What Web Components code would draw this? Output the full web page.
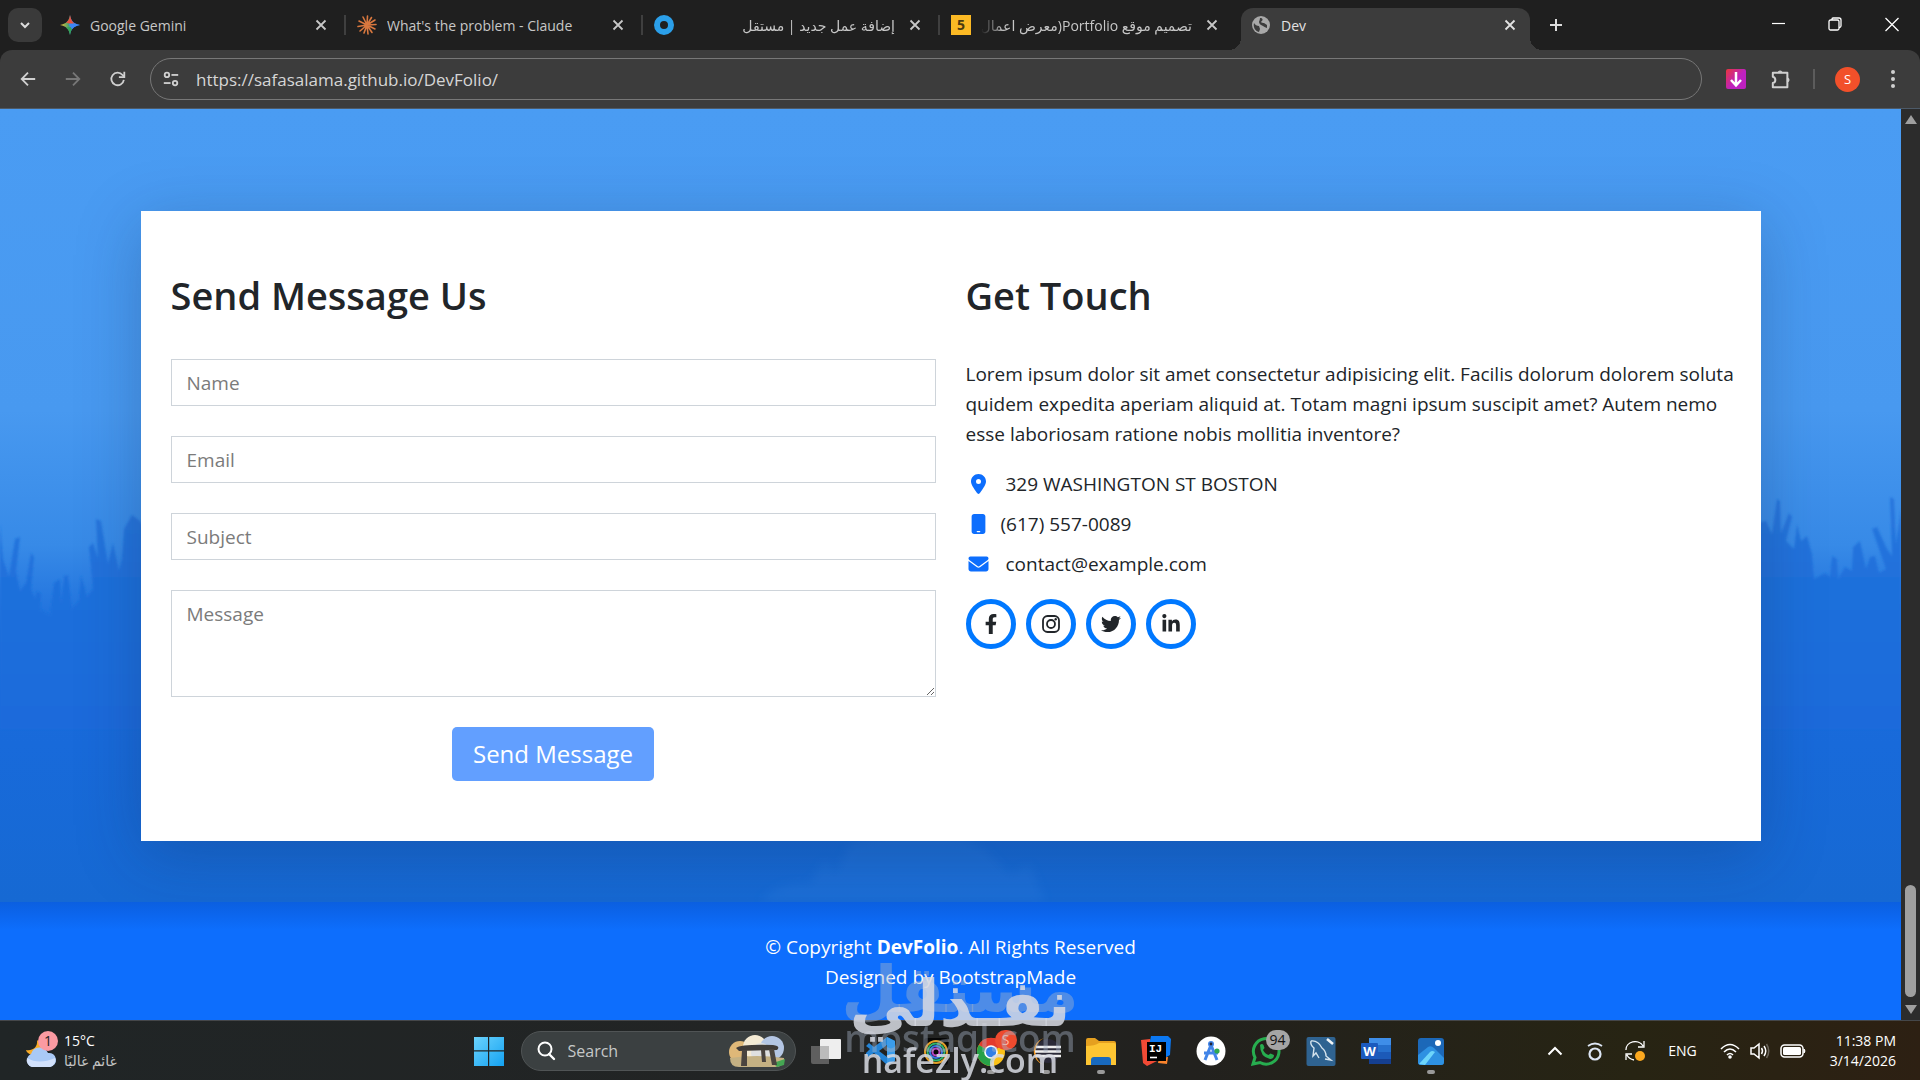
<!DOCTYPE html>
<html lang="en">
<head>
<meta charset="UTF-8">
<meta name="viewport" content="width=device-width, initial-scale=1">
<title>Dev</title>
<style>
  html, body { margin: 0; height: 100%; }
  body {
    display: flex;
    flex-direction: column;
    min-height: 100vh;
    overflow: hidden;
    background: #1f1f1f;
    font-family: "Open Sans", "DejaVu Sans", sans-serif;
  }
</style>
</head>
<body>
<browser-tabs>
  <browser-tab icon="gemini">Google Gemini</browser-tab>
  <browser-tab icon="claude">What's the problem - Claude</browser-tab>
  <browser-tab icon="ring" dir="rtl">إضافة عمل جديد | مستقل</browser-tab>
  <browser-tab icon="five" dir="rtl">تصميم موقع Portfolio(معرض اعمال</browser-tab>
  <browser-tab icon="globe" active>Dev</browser-tab>
</browser-tabs>
<browser-toolbar url="https://safasalama.github.io/DevFolio/"></browser-toolbar>
<page-view>
  <contact-section>
    <contact-form slot="form"></contact-form>
    <contact-info slot="info"></contact-info>
  </contact-section>
  <page-footer></page-footer>
</page-view>
<task-bar></task-bar>
<stamp-overlay></stamp-overlay>

<script>
const ICONS = {
  gemini: ["0 0 20 20", `<defs><linearGradient id="g" x1="0" y1="0" x2="1" y2="0"><stop offset="0" stop-color="#f9c22e"/><stop offset=".42" stop-color="#4fa26a"/><stop offset=".6" stop-color="#3b86f7"/></linearGradient></defs><path d="M10 0C11 6 14 9 20 10C14 11 11 14 10 20C9 14 6 11 0 10C6 9 9 6 10 0Z" fill="url(#g)"/><path d="M10 0C11 5 12.500 7.500 15 8.800L9 8.500L6 7.600C8.500 6 9.500 4 10 0Z" fill="#e9513d"/><path d="M6 12.500L11 12L12 14C10.800 16 10.400 18 10 20C9.500 16 8 14 6 12.500Z" fill="#33a457"/><path d="M8.500 9L15 8.500C17 9.500 19 9.800 20 10C16 10.600 14 12 12 14Z" fill="#3b86f7"/>`],
  claude: ["0 0 20 20", `<g stroke="#d9783f" stroke-width="1.600" stroke-linecap="round"><path d="M10 10L10.500 1M10 10L14.500 2.500M10 10L18 5M10 10L19 9.500M10 10L18 14M10 10L15 17.500M10 10L11 19M10 10L7 18M10 10L3 16M10 10L1 11.500M10 10L2 6M10 10L6 2"/></g>`],
  ring: ["0 0 20 20", `<circle cx="10" cy="10" r="7" fill="none" stroke="#2b9fe9" stroke-width="6"/>`],
  five: ["0 0 20 20", `<rect width="20" height="20" fill="#fbb924"/><text x="10" y="15" text-anchor="middle" font-family="Open Sans, sans-serif" font-size="14" font-weight="700" fill="#4a3a10">5</text>`],
  globe: ["0 0 20 20", `<circle cx="10" cy="10" r="9" fill="#a8a8a8"/><path d="M3 8C4 10 6 11 8 11L9 14L8 17C4 16 2 12 3 8ZM9 3C12 3 12 5 11 6C9 7 11 8 13 8L16 10L16 13C14 12 13 12 12 11C10 10 8 9 8 7C8 6 9 5 9 3Z" fill="#3c3c3c"/>`],
  down: ["0 0 20 20", `<path d="M6 8L10 12L14 8" fill="none" stroke="currentColor" stroke-width="2"/>`],
  close: ["0 0 20 20", `<path d="M5.500 5.500L14.500 14.500M14.500 5.500L5.500 14.500" stroke="currentColor" stroke-width="1.800"/>`],
  plus: ["0 0 20 20", `<path d="M10 4V16M4 10H16" stroke="currentColor" stroke-width="2"/>`],
  minimize: ["0 0 20 20", `<path d="M4 9.500H17" stroke="currentColor" stroke-width="1.200"/>`],
  restore: ["0 0 20 20", `<g fill="none" stroke="currentColor" stroke-width="1.300"><rect x="4" y="6" width="10" height="10" rx="1.500"/><path d="M7 6V5Q7 4 8 4H14Q16 4 16 6V12Q16 13.500 14 13.500"/></g>`],
  exit: ["0 0 20 20", `<path d="M3.500 4L16.500 17M16.500 4L3.500 17" stroke="currentColor" stroke-width="1.300"/>`],
  back: ["0 0 20 20", `<path d="M18 10H3M10 3L3 10L10 17" fill="none" stroke="currentColor" stroke-width="2"/>`],
  forward: ["0 0 20 20", `<path d="M2 10H17M10 3L17 10L10 17" fill="none" stroke="currentColor" stroke-width="2"/>`],
  reload: ["0 0 20 20", `<path d="M16.500 11A7 7 0 1 1 15 5.500L17 7.500" fill="none" stroke="currentColor" stroke-width="2"/><path d="M17 2V8H11" fill="none" stroke="currentColor" stroke-width="2"/>`],
  tune: ["0 0 20 20", `<g fill="none" stroke="currentColor" stroke-width="2"><circle cx="5.500" cy="5.500" r="2.500"/><path d="M10.500 5.500H18"/><circle cx="14.500" cy="14.500" r="2.500"/><path d="M2 14.500H9.500"/></g>`],
  download: ["0 0 20 20", `<defs><linearGradient id="d" x1="0" y1="0" x2=".6" y2=".5"><stop offset="0" stop-color="#e8363c"/><stop offset="1" stop-color="#be21c0"/></linearGradient></defs><rect width="20" height="20" rx="2" fill="url(#d)"/><path d="M10 3V16M5 11L10 16.500L15 11" fill="none" stroke="#fff" stroke-width="2.500"/>`],
  puzzle: ["0 0 22 22", `<path d="M2 4H18V20H2V15.500A3.600 3.600 0 0 0 2 8.500Z" fill="none" stroke="currentColor" stroke-width="2.200" stroke-linejoin="round"/><path d="M7.500 4A2.600 2.600 0 0 1 12.500 4ZM18 9.500A2.600 2.600 0 0 1 18 14.500Z" fill="currentColor" stroke="currentColor"/>`],
  dots: ["0 0 20 20", `<g fill="currentColor"><circle cx="10" cy="3" r="2"/><circle cx="10" cy="10" r="2"/><circle cx="10" cy="17" r="2"/></g>`],
  pin: ["0 0 384 512", `<path fill="currentColor" d="M215.700 499.200C267 435 384 279.400 384 192C384 86 298 0 192 0S0 86 0 192c0 87.400 117 243 168.300 307.200c12.300 15.300 35.100 15.300 47.400 0zM192 128a64 64 0 1 1 0 128a64 64 0 1 1 0-128z"/>`],
  phone: ["0 0 384 512", `<path fill="currentColor" d="M16 64C16 28.700 44.700 0 80 0H304c35.300 0 64 28.700 64 64V448c0 35.300-28.700 64-64 64H80c-35.300 0-64-28.700-64-64V64zM144 448c0 8.800 7.200 16 16 16h64c8.800 0 16-7.200 16-16s-7.200-16-16-16H160c-8.800 0-16 7.200-16 16z"/>`],
  mail: ["0 0 512 512", `<path fill="currentColor" d="M48 64C21.500 64 0 85.500 0 112c0 15.100 7.100 29.300 19.200 38.400L236.800 313.600c11.400 8.500 27 8.500 38.400 0L492.800 150.400c12.100-9.100 19.200-23.300 19.200-38.400c0-26.500-21.500-48-48-48H48zM0 176V384c0 35.300 28.700 64 64 64H448c35.300 0 64-28.700 64-64V176L294.400 339.200c-22.800 17.100-54 17.100-76.800 0L0 176z"/>`],
  facebook: ["0 0 320 512", `<path fill="currentColor" d="M279.140 288l14.220-92.660h-88.910v-60.130c0-25.350 12.420-50.060 52.240-50.060h40.420V6.260S260.430 0 225.360 0c-73.220 0-121.080 44.380-121.080 124.720v70.620H22.890V288h81.390v224h100.170V288z"/>`],
  instagram: ["0 0 20 20", `<g fill="none" stroke="currentColor" stroke-width="1.800"><rect x="2" y="2" width="16" height="16" rx="4.500"/><circle cx="10" cy="10" r="4"/></g><circle cx="14.700" cy="5.300" r="1.200" fill="currentColor"/>`],
  twitter: ["0 0 512 512", `<path fill="currentColor" d="M459.370 151.716c.325 4.548.325 9.097.325 13.645 0 138.720-105.583 298.558-298.558 298.558-59.452 0-114.680-17.219-161.137-47.106 8.447.974 16.568 1.299 25.340 1.299 49.055 0 94.213-16.568 130.274-44.832-46.132-.975-84.792-31.188-98.112-72.772 6.498.974 12.995 1.624 19.818 1.624 9.421 0 18.843-1.300 27.614-3.573-48.081-9.747-84.143-51.980-84.143-102.985v-1.299c13.969 7.797 30.214 12.670 47.431 13.319-28.264-18.843-46.781-51.005-46.781-87.391 0-19.492 5.197-37.360 14.294-52.954 51.655 63.675 129.300 105.258 216.365 109.807-1.624-7.797-2.599-15.918-2.599-24.040 0-57.828 46.782-104.934 104.934-104.934 30.213 0 57.502 12.670 76.670 33.137 23.715-4.548 46.456-13.320 66.599-25.340-7.798 24.366-24.366 44.833-46.132 57.827 21.117-2.273 41.584-8.122 60.426-16.243-14.292 20.791-32.161 39.308-52.628 54.253z"/>`],
  linkedin: ["0 0 448 512", `<path fill="currentColor" d="M100.280 448H7.400V148.900h92.880zM53.790 108.100C24.090 108.100 0 83.500 0 53.800a53.790 53.790 0 0 1 107.580 0c0 29.700-24.100 54.300-53.790 54.300zM447.900 448h-92.680V302.400c0-34.700-.7-79.200-48.290-79.200-48.290 0-55.690 37.700-55.690 76.700V448h-92.780V148.900h89.080v40.800h1.300c12.400-23.500 42.690-48.300 87.880-48.300 94 0 111.280 61.900 111.280 142.300V448z"/>`],
  weather: ["0 0 34 36", `<path d="M13 7C14 15 8 18 2 17C4 24 18 25 20 14Z" fill="#f8ab26"/><path d="M8 34A7 7 0 0 1 7 21A9 9 0 0 1 24 20A7 7 0 0 1 26 34Z" fill="#a9c9f6"/><path d="M8 34A7 7 0 0 1 3 25Q15 32 31 25A7 7 0 0 1 26 34Z" fill="#d2e1fb"/>`],
  windows: ["0 0 30 30", `<defs><linearGradient id="w" x1="0" y1="0" x2="1" y2="1"><stop offset="0" stop-color="#6bd3fd"/><stop offset="1" stop-color="#14a2f2"/></linearGradient></defs><path d="M0 1H14V14.200H0ZM15.200 1H30V14.200H15.200ZM0 15.500H14V30H0ZM15.200 15.500H30V30H15.200Z" fill="url(#w)"/>`],
  search: ["0 0 20 20", `<circle cx="9" cy="8" r="6.500" fill="none" stroke="currentColor" stroke-width="2"/><path d="M13 13L18 18" stroke="currentColor" stroke-width="2.400" stroke-linecap="round"/>`],
  dolmen: ["0 0 60 34", `<circle cx="13" cy="18" r="11" fill="#dfb878"/><circle cx="28" cy="13" r="12" fill="#f4ead4"/><circle cx="45" cy="14" r="12" fill="#b4c6e4"/><circle cx="34" cy="19" r="10" fill="#dfe0e0"/><path d="M3 24Q30 20 57 24Q58 33 48 33H12Q3 33 3 24Z" fill="#c4b183"/><path d="M46 29L58 25L57 31L50 33Z" fill="#45a653"/><path d="M9 14Q14 10 46 11Q54 12 50 16L12 17Z" fill="#3f3b38"/><path d="M15 16H20L20 32H14ZM34 16H38L39 28H35ZM42 15H47L50 31H45Z" fill="#4a443f"/>`],
  taskview: ["0 0 30 30", `<rect x="9" y="3" width="21" height="20" rx="1" fill="#eee"/><path d="M0 10H18V28H2Q0 28 0 26Z" fill="#666" opacity=".9"/><path d="M9 10H18V23H9Z" fill="#bbb"/>`],
  vscode: ["0 0 30 30", `<path d="M21 1L29 5V25L21 29L8 17L3 21L0 19V17L4 13L0 10L3 7L8 11Z" fill="#2484d6"/><path d="M21 9V21L13 15Z" fill="#22221f"/><path d="M21 1L29 5V25L21 29Z" fill="#3b9cea"/>`],
  rings: ["0 0 30 30", `<rect x="3" y="2" width="24" height="27" rx="3" fill="#080808"/><g fill="none" stroke-width="2"><circle cx="15" cy="16" r="11" stroke="#e2a029"/><circle cx="15" cy="16" r="8.500" stroke="#2fb46b"/><circle cx="15" cy="16" r="6" stroke="#3776de"/><circle cx="15" cy="16" r="3.500" stroke="#b844c2"/></g>`],
  chrome: ["0 0 30 30", `<circle cx="15" cy="16" r="14" fill="#fbc116"/><path d="M15 16L2.800 9A14 14 0 0 1 27.200 9Z" fill="#e33b2e"/><path d="M15 16L2.800 9A14 14 0 0 0 14 30L19 20Z" fill="#27a148"/><circle cx="15" cy="16" r="6.800" fill="#fff"/><circle cx="15" cy="16" r="5.200" fill="#327fe7"/>`],
  eclipse: ["0 0 30 30", `<path d="M13 2A14 14 0 0 0 13 29A15 15 0 0 1 13 2Z" fill="#f39a27"/><circle cx="17" cy="15" r="12" fill="#2b2a38"/><path d="M5 11H30M4 15.500H30M5 20H30" stroke="#eee" stroke-width="2.400"/>`],
  folder: ["0 0 30 30", `<path d="M0 4Q0 2 2 2H9L13 5H28Q30 5 30 7V26Q30 29 28 29H2Q0 29 0 27Z" fill="#e5a020"/><path d="M0 10Q9 10 13 7H28Q30 7 30 9V29H0Z" fill="#fdc533"/><path d="M5 29V24Q5 21 8 21H22Q25 21 25 24V29Z" fill="#1869be"/>`],
  intellij: ["0 0 30 30", `<path d="M0 4L9 3L18 24L6 30L2 27Z" fill="#f14a35"/><path d="M10 0H27L30 3L29 19L20 24L8 10Z" fill="#0b78f3"/><path d="M18 22L27 21L26 28L17 27Z" fill="#f9832c"/><rect x="6" y="6" width="19" height="19" fill="#000"/><path d="M9 21.500H16" stroke="#fff" stroke-width="1.600"/><text x="8" y="16" font-family="Liberation Mono, monospace" font-size="11" font-weight="700" fill="#fff">IJ</text>`],
  android: ["0 0 30 30", `<circle cx="15" cy="15" r="14.500" fill="#fff"/><path d="M9 24L15 9L21 24M8 17H22" fill="none" stroke="#4285e8" stroke-width="3"/><circle cx="15" cy="8" r="3" fill="#4285e8"/><circle cx="15" cy="8" r="1.400" fill="#223"/><circle cx="21" cy="15" r="2.600" fill="#2fa84f"/>`],
  whatsapp: ["0 0 30 30", `<path d="M2 28L4 21.500A12.800 12.800 0 1 1 9 26.500Z" fill="none" stroke="#27ad4f" stroke-width="3"/><path d="M9 9Q11 7 12.500 9L13.500 12L12 14Q14 18 17.500 19L19.500 17.500L23 19Q23 23 19 23Q9 21 9 9Z" fill="#27ad4f"/>`],
  mysql: ["0 0 30 30", `<rect x=".5" y="1" width="29" height="29" rx="2" fill="#2f6391"/><path d="M5 5Q12 4 16 12Q20 15 20 20L25 24L19 23M5 5Q4 9 8 12L7 20L10 17L13 22" fill="none" stroke="#d6e4ee" stroke-width="1.400"/><path d="M21 3L27 8" stroke="#f1f5f7" stroke-width="2.600"/>`],
  word: ["0 0 30 30", `<path d="M8 2H30V9H8Z" fill="#3f8ee8"/><path d="M8 9H30V16H8Z" fill="#2670cd"/><path d="M8 16H30V23H8Z" fill="#1c5ab8"/><path d="M8 23H30V28H8Z" fill="#153f90"/><rect y="7" width="17" height="16" rx="1" fill="#1b5abe"/><text x="8.500" y="20" text-anchor="middle" font-family="Open Sans, sans-serif" font-size="13" font-weight="700" fill="#fff">W</text>`],
  photos: ["0 0 30 30", `<rect x="2" y="2" width="26" height="27" rx="3" fill="#1c68b8"/><path d="M2 19L12 11Q15 9 18 12L28 22V26Q28 29 25 29H5Q2 29 2 26Z" fill="#2e91e2"/><path d="M3 28L14 16Q16 14 19 16L9 29Z" fill="#6dd5fa"/><circle cx="22" cy="7" r="3" fill="#fff"/>`],
  chevron: ["0 0 20 20", `<path d="M3.500 13.500L10 7L16.500 13.500" fill="none" stroke="currentColor" stroke-width="2"/>`],
  hat: ["0 0 20 20", `<circle cx="10" cy="13" r="5.500" fill="none" stroke="#dde6f5" stroke-width="2.200"/><path d="M3 5Q10 0 17 5" fill="none" stroke="#dde6f5" stroke-width="1.800"/>`],
  sync: ["0 0 20 20", `<path d="M1 9A9 8 0 0 1 18 5M19 0V6H13M1 19V13H7M2 14Q4 18 9 19" fill="none" stroke="currentColor" stroke-width="1.300"/><circle cx="15" cy="15" r="5" fill="#fba81f"/>`],
  wifi: ["0 0 20 20", `<g fill="none" stroke="currentColor" stroke-width="1.600"><path d="M1 8Q10-1 19 8M4 11Q10 5 16 11M7 14Q10 11 13 14"/></g><circle cx="10" cy="16" r="1.800" fill="currentColor"/>`],
  volume: ["0 0 20 20", `<g fill="none" stroke="currentColor" stroke-width="1.500"><path d="M1 7H4L9 3V17L4 13H1ZM11.500 7Q13.500 10 11.500 13M14 5Q17.500 10 14 15"/><path d="M16.500 3Q21 10 16.500 17" opacity=".3"/></g>`],
  battery: ["0 0 26 20", `<rect x="1" y="4" width="22" height="12" rx="3.500" fill="none" stroke="currentColor" stroke-width="1.500"/><rect x="3" y="6" width="18" height="8" rx="1.500" fill="currentColor"/><path d="M24 8Q26 10 24 12Z" fill="currentColor" stroke="currentColor"/>`],
};

class UiIcon extends HTMLElement {
  constructor() {
    super();
    this.attachShadow({ mode: "open" });
  }

  connectedCallback() {
    const [box, shape] = ICONS[this.getAttribute("name")];
    this.shadowRoot.innerHTML = `
      <style>
        :host { display: block; flex: none; width: 20px; height: 20px; }
        svg { display: block; width: 100%; height: 100%; }
      </style>
      <svg viewBox="${box}" aria-hidden="true">${shape}</svg>
    `;
  }
}

class BrowserTab extends HTMLElement {
  constructor() {
    super();
    this.attachShadow({ mode: "open" });
  }

  connectedCallback() {
    const dir = this.getAttribute("dir") || "ltr";
    this.shadowRoot.innerHTML = `
      <style>
        :host {
          display: flex;
          align-items: center;
          gap: 10px;
          box-sizing: border-box;
          flex: 0 1 297px;
          min-width: 0;
          padding: 0 15px 0 11px;
          direction: ltr;
          position: relative;
          color: #c7c7c7;
          font-size: 14px;
        }
        :host([active]) {
          flex-basis: 289px;
          margin: 0 0 0 4px;
          padding: 0 10px;
          background: #3c3c3c;
          border-radius: 12px 12px 0 0;
          color: #e3e3e3;
        }
        :host([active])::before, :host([active])::after {
          content: "";
          position: absolute;
          bottom: 0;
          width: 12px;
          height: 12px;
        }
        :host([active])::before {
          right: 100%;
          background: radial-gradient(circle at 0 0, transparent 12px, #3c3c3c 12px);
        }
        :host([active])::after {
          left: 100%;
          background: radial-gradient(circle at 100% 0, transparent 12px, #3c3c3c 12px);
        }
        .title {
          flex: 1;
          min-width: 0;
          overflow: hidden;
          white-space: nowrap;
        }
        .title[dir=rtl] { mask-image: linear-gradient(to right, transparent, #000 24px); }
        button {
          width: 20px;
          height: 20px;
          padding: 0;
          border: 0;
          background: none;
          color: inherit;
        }
        hr {
          position: absolute;
          right: 0;
          width: 2px;
          height: 20px;
          margin: 0;
          border: 0;
          background: #3f3f3f;
        }
        :host([active]) hr, :host([last]) hr { display: none; }
      </style>
      <ui-icon name="${this.getAttribute("icon")}"></ui-icon>
      <span class="title" dir="${dir}"><slot></slot></span>
      <button aria-label="Close tab"><ui-icon name="close"></ui-icon></button>
      <hr>
    `;
    if (this.nextElementSibling && this.nextElementSibling.hasAttribute("active")) {
      this.setAttribute("last", "");
    }
  }
}

class BrowserTabs extends HTMLElement {
  constructor() {
    super();
    this.attachShadow({ mode: "open" });
    this.shadowRoot.innerHTML = `
      <style>
        :host { display: flex; flex: none; height: 50px; background: #1f1f1f; color: #dcdcdc; }
        button {
          display: grid;
          place-items: center;
          padding: 0;
          border: 0;
          background: none;
          color: inherit;
        }
        .menu {
          width: 34px;
          height: 34px;
          margin: 8px 7px 8px 8px;
          border-radius: 10px;
          background: #3a3a3a;
        }
        .tabs { display: flex; flex: 0 1 1481px; min-width: 0; padding-top: 8px; box-sizing: border-box; }
        .tabs ::slotted(*) { padding-bottom: 8px; }
        .new { width: 52px; }
        .window { display: flex; margin-left: auto; }
        .window button { width: 57px; height: 48px; color: #fff; }
      </style>
      <button class="menu" aria-label="Search tabs"><ui-icon name="down"></ui-icon></button>
      <div class="tabs"><slot></slot></div>
      <button class="new" aria-label="New tab"><ui-icon name="plus"></ui-icon></button>
      <div class="window">
        <button aria-label="Minimize"><ui-icon name="minimize"></ui-icon></button>
        <button aria-label="Restore"><ui-icon name="restore"></ui-icon></button>
        <button aria-label="Close"><ui-icon name="exit"></ui-icon></button>
      </div>
    `;
  }
}

class BrowserToolbar extends HTMLElement {
  constructor() {
    super();
    this.attachShadow({ mode: "open" });
  }

  connectedCallback() {
    this.shadowRoot.innerHTML = `
      <style>
        :host { display: block; flex: none; background: #1f1f1f; color: #d0d0d0; }
        .bar {
          display: flex;
          align-items: center;
          height: 58px;
          padding: 0 5px;
          border-bottom: 1px solid #4d5a68;
          border-radius: 12px 12px 0 0;
          background: #3c3c3c;
        }
        button {
          display: grid;
          place-items: center;
          width: 45px;
          height: 40px;
          padding: 0;
          border: 0;
          background: none;
          color: inherit;
          font: inherit;
        }
        .nav ui-icon { width: 18px; height: 18px; }
        .nav { display: flex; }
        .nav button:disabled { color: #777; }
        label {
          display: flex;
          align-items: center;
          gap: 16px;
          flex: 1;
          height: 40px;
          margin: 0 11px 0 10px;
          padding: 0 11px;
          border: 1px solid #777;
          border-radius: 21px;
        }
        label ui-icon { width: 18px; height: 18px; }
        input {
          flex: 1;
          padding: 0;
          border: 0;
          outline: 0;
          background: none;
          color: #d6d6d6;
          font: inherit;
          font-size: 17px;
        }
        hr { width: 2px; height: 20px; margin: 0 10px; border: 0; background: #5c5c5c; }
        .avatar span {
          width: 25px;
          border-radius: 50%;
          background: #f2502a;
          color: #fff;
          font-size: 13px;
          line-height: 25px;
        }
      </style>
      <div class="bar">
        <div class="nav">
          <button aria-label="Back"><ui-icon name="back"></ui-icon></button>
          <button aria-label="Forward" disabled><ui-icon name="forward"></ui-icon></button>
          <button aria-label="Reload"><ui-icon name="reload"></ui-icon></button>
        </div>
        <label>
          <ui-icon name="tune"></ui-icon>
          <input type="text" aria-label="Address" value="${this.getAttribute("url")}">
        </label>
        <button aria-label="Downloader"><ui-icon name="download"></ui-icon></button>
        <button aria-label="Extensions"><ui-icon name="puzzle"></ui-icon></button>
        <hr>
        <button class="avatar" aria-label="Profile"><span>S</span></button>
        <button aria-label="Menu"><ui-icon name="dots"></ui-icon></button>
      </div>
    `;
  }
}

class PageView extends HTMLElement {
  constructor() {
    super();
    this.attachShadow({ mode: "open" });
    this.shadowRoot.innerHTML = `
      <style>
        :host { display: flex; flex: 1; min-height: 0; font-size: 19px; line-height: 30px; }
        main { display: flex; flex-direction: column; flex: 1; min-width: 0; overflow: hidden; }
        .scroll {
          display: flex;
          flex-direction: column;
          align-items: center;
          gap: 8px;
          width: 19px;
          padding: 6px 0;
          box-sizing: border-box;
          background: #2c2c2c;
        }
        .up, .down { border: 6px solid transparent; }
        .up { border-bottom: 9px solid #9f9f9f; border-top: 0; }
        .down { border-top: 9px solid #9f9f9f; border-bottom: 0; }
        .thumb { width: 11px; height: 112px; margin-top: auto; border-radius: 6px; background: #9f9f9f; }
      </style>
      <main><slot></slot></main>
      <div class="scroll"><i class="up"></i><i class="thumb"></i><i class="down"></i></div>
    `;
  }
}

class ContactSection extends HTMLElement {
  constructor() {
    super();
    this.attachShadow({ mode: "open" });
    this.shadowRoot.innerHTML = `
      <style>
        :host {
          display: block;
          flex: none;
          position: relative;
          padding: 102px 140px 61px;
          background: linear-gradient(#4a9cf3, #4899f0 38%, #378ae7 55%, #1c6ddb 66%, #186ada 80%, #1669d3);
        }
        .trees { position: absolute; left: 0; top: 0; width: 100%; height: 100%; }
        .card {
          display: grid;
          grid-template-columns: 1fr 1fr;
          gap: 30px;
          max-width: 1560px;
          margin: 0 auto;
          padding: 60px 30px;
          position: relative;
          background: #fff;
          box-shadow: 0 14px 60px rgba(20, 40, 80, .27);
        }
      </style>
      <svg class="trees" viewBox="0 0 1901 793" preserveAspectRatio="none" aria-hidden="true">
        <defs>
          <linearGradient id="fade" gradientUnits="userSpaceOnUse" x1="0" y1="390" x2="0" y2="620">
            <stop offset="0" stop-color="#2876dd"/>
            <stop offset=".45" stop-color="#1d6fdb"/>
            <stop offset="1" stop-color="#1b6bdb"/>
          </linearGradient>
          <filter id="soft" x="-5%" y="-5%" width="110%" height="110%"><feGaussianBlur stdDeviation="1.200"/></filter>
          <filter id="haze" x="-10%" y="-20%" width="120%" height="140%"><feGaussianBlur stdDeviation="5"/></filter>
        </defs>
        <g fill="url(#fade)" filter="url(#soft)">
          <path d="M0 415L3 450L9 468L15 430L20 428L16 462L20 482L26 474L31 444L34 448L31 480L35 490L37 482L41 485L40 500L50 506L54 474L60 470L61 495L64 467L68 466L72 500L79 492L81 466L87 488L93 480L89 438L93 434L98 450L96 410L101 412L108 455L113 434L119 462L122 450L124 420L132 406L140 412L160 450V620H0Z"/>
          <path d="M1730 420L1766 412L1772 425L1777 390L1780 392L1781 424L1789 404L1792 408L1786 432L1794 440L1797 415L1801 432L1807 427L1812 445L1814 470L1825 464L1830 468L1832 447L1837 450L1838 470L1845 458L1852 462L1853 438L1860 432L1866 460L1870 448L1875 447L1879 464L1886 460L1872 420L1877 418L1887 440L1892 447L1890 388L1894 390L1896 435L1901 400V620H1730Z"/>
        </g>
        <g fill="#2f7fe0" opacity=".25" filter="url(#haze)">
          <path d="M760 793Q780 770 810 775L825 750L835 765L850 735Q930 710 985 740L1010 765L1030 755L1045 793Z"/>
        </g>
      </svg>
      <div class="card">
        <slot name="form"></slot>
        <slot name="info"></slot>
      </div>
    `;
  }
}

class ContactForm extends HTMLElement {
  constructor() {
    super();
    this.attachShadow({ mode: "open" });
    this.shadowRoot.innerHTML = `
      <style>
        :host { display: block; }
        h2 { margin: 0 0 40px; color: #212529; font-size: 38px; font-weight: 600; line-height: 48px; }
        form { display: flex; flex-direction: column; gap: 30px; }
        input, textarea {
          display: block;
          box-sizing: border-box;
          width: 100%;
          height: 47px;
          margin: 0;
          padding: 8px 15px;
          border: 1px solid #ced4da;
          border-radius: 0;
          outline: 0;
          background: #fff;
          font: inherit;
        }
        textarea { height: 107px; resize: vertical; }
        ::placeholder { color: #7b7b7b; opacity: 1; }
        button {
          align-self: center;
          height: 54px;
          padding: 0 21px;
          border: 0;
          border-radius: 5px;
          background: #629fff;
          color: #fff;
          font: inherit;
          font-size: 24px;
        }
      </style>
      <h2>Send Message Us</h2>
      <form>
        <input type="text" placeholder="Name" aria-label="Name">
        <input type="email" placeholder="Email" aria-label="Email">
        <input type="text" placeholder="Subject" aria-label="Subject">
        <textarea placeholder="Message" aria-label="Message"></textarea>
        <button type="button">Send Message</button>
      </form>
    `;
  }
}

class ContactInfo extends HTMLElement {
  constructor() {
    super();
    this.attachShadow({ mode: "open" });
    this.shadowRoot.innerHTML = `
      <style>
        :host { display: block; color: #212529; }
        h2 { margin: 0 0 40px; font-size: 38px; font-weight: 600; line-height: 48px; }
        p { margin: 0 -20px 20px 0; }
        ul { margin: 0; padding: 0; list-style: none; }
        li { display: flex; align-items: center; gap: 15px; margin-bottom: 10px; }
        li.tight { gap: 10px; }
        li ui-icon { width: 25px; height: 20px; color: #0d6efd; }
        .social { display: flex; gap: 10px; margin-top: 20px; }
        a {
          display: grid;
          place-items: center;
          box-sizing: border-box;
          width: 50px;
          height: 50px;
          border: 5px solid #0078ff;
          border-radius: 50%;
          color: #212529;
        }
      </style>
      <h2>Get Touch</h2>
      <p>Lorem ipsum dolor sit amet consectetur adipisicing elit. Facilis dolorum dolorem soluta quidem expedita aperiam aliquid at. Totam magni ipsum suscipit amet? Autem nemo esse laboriosam ratione nobis mollitia inventore?</p>
      <ul>
        <li><ui-icon name="pin"></ui-icon>329 WASHINGTON ST BOSTON</li>
        <li class="tight"><ui-icon name="phone"></ui-icon>(617) 557-0089</li>
        <li><ui-icon name="mail"></ui-icon>contact@example.com</li>
      </ul>
      <div class="social">
        <a href="#" aria-label="Facebook"><ui-icon name="facebook"></ui-icon></a>
        <a href="#" aria-label="Instagram"><ui-icon name="instagram"></ui-icon></a>
        <a href="#" aria-label="Twitter"><ui-icon name="twitter"></ui-icon></a>
        <a href="#" aria-label="LinkedIn"><ui-icon name="linkedin"></ui-icon></a>
      </div>
    `;
  }
}

class PageFooter extends HTMLElement {
  constructor() {
    super();
    this.attachShadow({ mode: "open" });
    this.shadowRoot.innerHTML = `
      <style>
        :host {
          display: block;
          flex: 1;
          padding-top: 30px;
          position: relative;
          background: linear-gradient(#0b5fe0, #0d6efd 28px);
          color: #fff;
          text-align: center;
        }
        p { margin: 0; }
        a { color: inherit; text-decoration: none; }
      </style>
      <p>© Copyright <strong>DevFolio</strong>. All Rights Reserved</p>
      <p>Designed by <a href="#">BootstrapMade</a></p>
    `;
  }
}

class TaskBar extends HTMLElement {
  constructor() {
    super();
    this.attachShadow({ mode: "open" });
    this.render();
  }

  render() {
    const apps = [
      ["taskview", ""],
      ["vscode", ""],
      ["rings", ""],
      ["chrome", "S", true],
      ["eclipse", "", true],
      ["folder", "", true],
      ["intellij", ""],
      ["android", ""],
      ["whatsapp", "94"],
      ["mysql", ""],
      ["word", ""],
      ["photos", "", true],
    ];
    const buttons = apps.map(([name, badge, open]) => `
      <button class="app ${open ? "open" : ""}" aria-label="${name}">
        <ui-icon name="${name}"></ui-icon>
        ${badge ? `<span class="badge ${name}">${badge}</span>` : ""}
      </button>`).join("");

    this.shadowRoot.innerHTML = `
      <style>
        :host {
          display: grid;
          grid-template-columns: 1fr auto 1fr;
          align-items: center;
          flex: none;
          height: 59px;
          border-top: 1px solid #45474a;
          background: linear-gradient(to right, #202526, #222424 40%, #22211e 62%, #272413 85%, #2d2013);
          color: #fff;
          font-size: 14px;
          line-height: 20px;
        }
        button {
          padding: 0;
          border: 0;
          background: none;
          color: inherit;
          font: inherit;
        }
        .side { display: flex; align-items: center; min-width: 0; }
        .weather {
          display: flex;
          align-items: center;
          gap: 6px;
          margin-left: 24px;
          position: relative;
          text-align: left;
        }
        .weather ui-icon { width: 34px; height: 36px; }
        .weather small { display: block; color: #c4c4c4; font-size: 14px; }
        .badge {
          position: absolute;
          border-radius: 12px;
          text-align: center;
        }
        .weather .badge { left: 14px; top: 0; width: 20px; background: #fb9aa2; color: #222; }
        .middle { display: flex; align-items: center; }
        .app {
          display: grid;
          place-items: center;
          flex: none;
          width: 55px;
          height: 58px;
          position: relative;
        }
        .app ui-icon { width: 30px; height: 30px; }
        .app .badge { right: 4px; top: 8px; min-width: 24px; background: #a5a5a5; color: #111; }
        .app .chrome { right: 2px; top: 8px; min-width: 22px; background: #ee4b2f; color: #ffb9a5; }
        .open::after {
          content: "";
          position: absolute;
          bottom: 6px;
          width: 8px;
          height: 4px;
          border-radius: 2px;
          background: #999;
        }
        label {
          display: flex;
          align-items: center;
          gap: 12px;
          box-sizing: border-box;
          flex: none;
          width: 275px;
          height: 40px;
          margin: 0 3px 0 4px;
          padding: 0 8px 0 14px;
          border: 1px solid #505455;
          border-radius: 20px;
          background: #3b4041;
        }
        label .pic { width: 60px; height: 34px; }
        input {
          flex: 1;
          min-width: 0;
          padding: 0;
          border: 0;
          outline: 0;
          background: none;
          font: inherit;
          font-size: 16px;
        }
        ::placeholder { color: #c6c8c8; opacity: 1; }
        .tray { justify-content: flex-end; gap: 20px; padding-right: 24px; }
        .lang { padding: 0 3px; }
        .status { display: flex; gap: 10px; padding-right: 4px; }
        .status .battery { width: 26px; }
        .clock { text-align: right; }
        .clock time { display: block; }
      </style>
      <div class="side">
        <button class="weather">
          <ui-icon name="weather"></ui-icon>
          <span class="badge">1</span>
          <span>15°C<small dir="rtl">غائم غالبًا</small></span>
        </button>
      </div>
      <div class="middle">
        <button class="app" aria-label="Start"><ui-icon name="windows"></ui-icon></button>
        <label>
          <ui-icon name="search"></ui-icon>
          <input type="search" placeholder="Search" aria-label="Search">
          <ui-icon class="pic" name="dolmen"></ui-icon>
        </label>
        ${buttons}
      </div>
      <div class="side tray">
        <button aria-label="Hidden icons"><ui-icon name="chevron"></ui-icon></button>
        <button aria-label="Input"><ui-icon name="hat"></ui-icon></button>
        <button aria-label="Update"><ui-icon name="sync"></ui-icon></button>
        <button class="lang">ENG</button>
        <button class="status" aria-label="Quick settings">
          <ui-icon name="wifi"></ui-icon>
          <ui-icon name="volume"></ui-icon>
          <ui-icon class="battery" name="battery"></ui-icon>
        </button>
        <button class="clock"><time>11:38 PM</time><time>3/14/2026</time></button>
      </div>
    `;
  }
}

// semi-transparent site marks over the bottom of the screen
class StampOverlay extends HTMLElement {
  constructor() {
    super();
    this.attachShadow({ mode: "open" });
    this.shadowRoot.innerHTML = `
      <style>
        :host {
          position: fixed;
          left: 0;
          right: 0;
          bottom: 0;
          height: 140px;
          pointer-events: none;
          text-align: center;
          white-space: nowrap;
        }
        div { position: absolute; left: 0; right: 0; }
        .ar { font-family: "DejaVu Sans", sans-serif; font-weight: 700; }
        .back { color: rgba(170, 180, 200, .42); }
        .front { color: rgba(215, 218, 226, .86); }
        .back.ar { bottom: 50px; font-size: 65px; line-height: 80px; }
        .back.en { bottom: 18px; font-size: 37px; line-height: 48px; font-weight: 600; }
        .front.ar { bottom: 36px; font-size: 65px; line-height: 80px; }
        .front.en { bottom: 0; font-size: 34px; line-height: 40px; font-weight: 600; }
      </style>
      <div class="back ar" dir="rtl">مستقل</div>
      <div class="back en">mostaql.com</div>
      <div class="front ar" dir="rtl">نفـذلي</div>
      <div class="front en">nafezly.com</div>
    `;
  }
}

customElements.define("ui-icon", UiIcon);
customElements.define("browser-tab", BrowserTab);
customElements.define("browser-tabs", BrowserTabs);
customElements.define("browser-toolbar", BrowserToolbar);
customElements.define("page-view", PageView);
customElements.define("contact-section", ContactSection);
customElements.define("contact-form", ContactForm);
customElements.define("contact-info", ContactInfo);
customElements.define("page-footer", PageFooter);
customElements.define("task-bar", TaskBar);
customElements.define("stamp-overlay", StampOverlay);
</script>
</body>
</html>
